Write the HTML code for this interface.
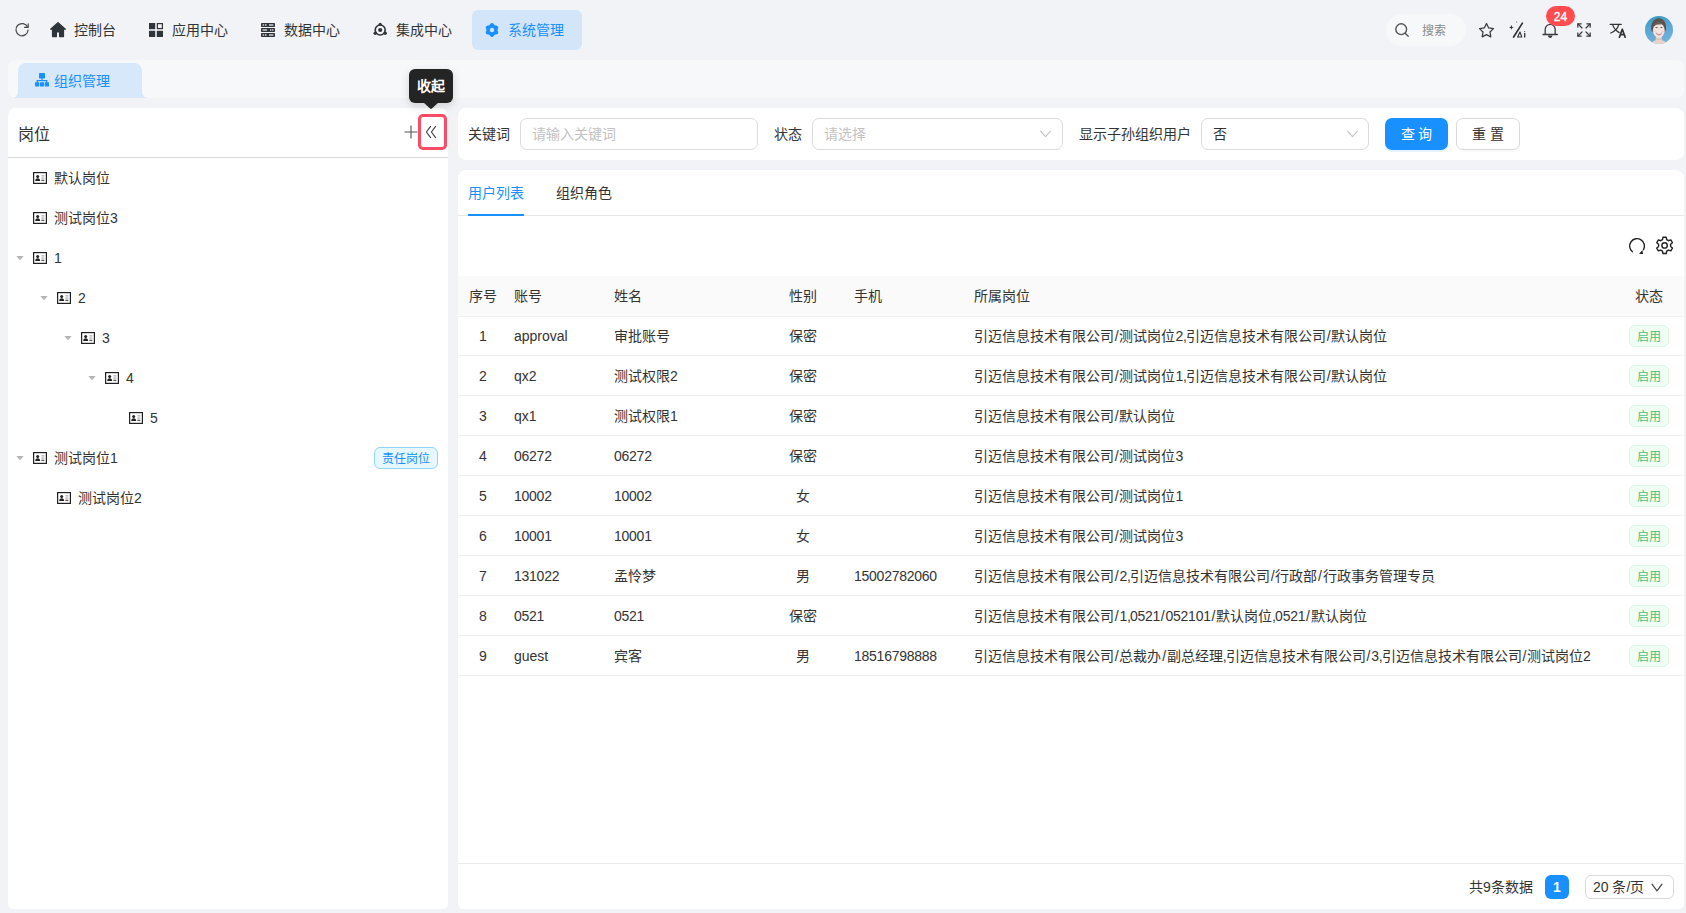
<!DOCTYPE html>
<html lang="zh-CN">
<head>
<meta charset="utf-8">
<title>组织管理</title>
<style>
*{box-sizing:border-box;margin:0;padding:0}
html,body{width:1686px;height:913px;overflow:hidden;font-family:"Liberation Sans",sans-serif}
body{background:#f2f3f7;font-family:"Liberation Sans",sans-serif;font-size:14px;color:#333;position:relative}
.abs{position:absolute}
svg{display:block}
/* top nav */
.nav-item{position:absolute;top:10px;height:40px;width:110px;border-radius:6px;line-height:40px;color:#333;font-size:14px;white-space:nowrap}
.nav-item svg{position:absolute;top:13px}
.nav-item span{position:absolute;left:36px;top:0}
.nav-item.active{background:#d3e5f8;color:#1890ff}
/* tab bar */
#tabbar{left:8px;top:60px;width:1676px;height:38px;background:#f7f8fa;border-radius:8px}
#tab{left:18px;top:63px;width:124px;height:35px;background:#d6e8fa;border-radius:8px 8px 0 0;color:#1890ff;font-size:14px;line-height:36px}
#tab span{position:absolute;left:36px;top:0;white-space:nowrap}
.flare{position:absolute;bottom:0;width:6px;height:6px;background:#d6e8fa;overflow:hidden}
.flare i{position:absolute;width:12px;height:12px;border-radius:50%;background:#f7f8fa;bottom:0}
/* panels */
.panel{position:absolute;background:#fff;border-radius:8px}
.lbl{position:absolute;white-space:nowrap;font-size:14px;color:#333;line-height:20px}
.inp{position:absolute;top:118px;height:32px;border:1px solid #dbdbdb;border-radius:7px;background:#fff;font-size:14px;line-height:30px;padding-left:11px;color:#c2c2c2;white-space:nowrap}
.inp svg{position:absolute;top:9px}
.btn{position:absolute;top:118px;height:32px;border-radius:7px;font-size:14px;line-height:30px;text-align:center;white-space:nowrap}
/* tree */
.tr{position:absolute;height:40px;line-height:40px;font-size:14px;color:#333;white-space:nowrap}
.caret{position:absolute;width:7.4px;height:4.3px;background:#b5b5b5;clip-path:polygon(0 0,100% 0,50% 100%);margin:1px 0 0 .3px}
/* table */
.th,.td{position:absolute;white-space:nowrap;font-size:14px;line-height:20px;color:#333}
.row-line{position:absolute;left:458px;width:1226px;height:1px;background:#f0f0f0}
.tag{position:absolute;left:1629px;width:40px;height:22px;border:1px solid #dcf6e4;background:#f0fdf4;border-radius:6px;color:#4cc375;font-size:12px;line-height:22px;text-align:center}
i{font-style:normal}
.sl{padding:0 .75px}
.cm{margin-right:-.9px}
.dg{letter-spacing:-.25px}
</style>
</head>
<body>
<!-- TOPNAV -->
<!-- refresh -->
<svg class="abs" style="left:14px;top:22px" width="16" height="16" viewBox="0 0 16 16" fill="none" stroke="#484848" stroke-width="1.2" stroke-linecap="round" stroke-linejoin="round"><path d="M13.6 5.2A6.1 6.1 0 1 0 14.1 8"/><path d="M14.2 1.8v3.6h-3.6" /></svg>
<div class="nav-item" style="left:38px;width:96px">
  <svg style="left:11px;top:11px" width="18" height="17" viewBox="0 0 18 17"><path fill="#30353b" stroke="#30353b" stroke-width="1.2" stroke-linejoin="round" d="M9 1.600 1.600 8.200h1.900v7.400h3.900v-4.600h3.200v4.600h3.900V8.200h1.900z"/></svg>
  <span>控制台</span>
</div>
<div class="nav-item" style="left:136px">
  <svg style="left:13px" width="14" height="14" viewBox="0 0 14 14"><rect x="0" y="0" width="6.200" height="6.200" fill="#30353b"/><rect x="0" y="7.800" width="6.200" height="6.200" fill="#30353b"/><rect x="7.800" y="7.800" width="6.200" height="6.200" fill="#30353b"/><rect x="8.400" y="0.600" width="5" height="5" fill="none" stroke="#30353b" stroke-width="1.200"/></svg>
  <span>应用中心</span>
</div>
<div class="nav-item" style="left:248px">
  <svg style="left:13px" width="14" height="14" viewBox="0 0 14 14"><g fill="#30353b"><rect x="0" y="0" width="14" height="4" rx="0.8"/><rect x="0" y="5" width="14" height="4" rx="0.8"/><rect x="0" y="10" width="14" height="4" rx="0.8"/></g><g fill="#f2f3f7"><rect x="1.6" y="1.4" width="1.6" height="1.2"/><rect x="4" y="1.4" width="1.6" height="1.2"/><rect x="8" y="1.4" width="4.4" height="1.2"/><rect x="1.6" y="6.4" width="4.4" height="1.2"/><rect x="9" y="6.4" width="1.4" height="1.2"/><rect x="11" y="6.4" width="1.4" height="1.2"/><rect x="1.6" y="11.4" width="1.6" height="1.2"/><rect x="4" y="11.4" width="1.6" height="1.2"/><rect x="8" y="11.4" width="4.4" height="1.2"/></g></svg>
  <span>数据中心</span>
</div>
<div class="nav-item" style="left:360px">
  <svg style="left:13px;top:12px" width="15" height="15" viewBox="0 0 15 15"><circle cx="7.2" cy="8" r="5" fill="none" stroke="#30353b" stroke-width="1.6"/><circle cx="7.2" cy="8" r="2.1" fill="#30353b"/><circle cx="7.2" cy="2.3" r="1.6" fill="#30353b"/><circle cx="2.2" cy="11.3" r="1.7" fill="#30353b"/><circle cx="12.2" cy="11.3" r="1.7" fill="#30353b"/></svg>
  <span>集成中心</span>
</div>
<div class="nav-item active" style="left:472px">
  <svg style="left:13px" width="14" height="14" viewBox="0 0 14 14"><path fill="#1890ff" d="M12.55 7.00 L12.59 7.37 L12.71 7.75 L12.87 8.17 L13.04 8.62 L13.17 9.10 L13.23 9.58 L13.19 10.05 L13.02 10.47 L12.73 10.83 L12.35 11.11 L11.90 11.30 L11.42 11.42 L10.94 11.50 L10.50 11.57 L10.11 11.66 L9.78 11.81 L9.48 12.03 L9.20 12.32 L8.92 12.66 L8.62 13.04 L8.27 13.39 L7.88 13.69 L7.45 13.88 L7.00 13.95 L6.55 13.88 L6.12 13.69 L5.73 13.39 L5.38 13.04 L5.08 12.66 L4.80 12.32 L4.52 12.03 L4.23 11.81 L3.89 11.66 L3.50 11.57 L3.06 11.50 L2.58 11.42 L2.10 11.30 L1.65 11.11 L1.27 10.83 L0.98 10.47 L0.81 10.05 L0.77 9.58 L0.83 9.10 L0.96 8.62 L1.13 8.17 L1.29 7.75 L1.41 7.37 L1.45 7.00 L1.41 6.63 L1.29 6.25 L1.13 5.83 L0.96 5.38 L0.83 4.90 L0.77 4.42 L0.81 3.95 L0.98 3.53 L1.27 3.17 L1.65 2.89 L2.10 2.70 L2.58 2.58 L3.06 2.50 L3.50 2.43 L3.89 2.34 L4.22 2.19 L4.52 1.97 L4.80 1.68 L5.08 1.34 L5.38 0.96 L5.73 0.61 L6.12 0.31 L6.55 0.12 L7.00 0.05 L7.45 0.12 L7.88 0.31 L8.27 0.61 L8.62 0.96 L8.92 1.34 L9.20 1.68 L9.48 1.97 L9.78 2.19 L10.11 2.34 L10.50 2.43 L10.94 2.50 L11.42 2.58 L11.90 2.70 L12.35 2.89 L12.73 3.17 L13.02 3.52 L13.19 3.95 L13.23 4.42 L13.17 4.90 L13.04 5.38 L12.87 5.83 L12.71 6.25 L12.59 6.63z"/><circle cx="7" cy="7" r="2.2" fill="#d3e5f8"/></svg>
  <span>系统管理</span>
</div>
<!-- right side -->
<div class="abs" style="left:1386px;top:14px;width:80px;height:32px;border-radius:16px;background:#f7f8fa"></div>
<svg class="abs" style="left:1394px;top:22px" width="16" height="16" viewBox="0 0 16 16" fill="none" stroke="#555" stroke-width="1.4" stroke-linecap="round"><circle cx="7.2" cy="7.2" r="5.4"/><path d="M11.2 11.2l3 3"/></svg>
<div class="abs" style="left:1422px;top:23px;font-size:12px;line-height:16px;color:#8a8a8a;white-space:nowrap">搜索</div>
<!-- star -->
<svg class="abs" style="left:1477.500px;top:21.500px" width="17" height="17" viewBox="0 0 18 18" fill="none" stroke="#3a3a3a" stroke-width="1.350" stroke-linejoin="round"><path d="M9 1.600l2.300 4.700 5.100 0.700-3.700 3.600 0.900 5.100L9 13.300l-4.600 2.400 0.900-5.100L1.600 7l5.100-0.700z"/></svg>
<!-- ai -->
<svg class="abs" style="left:1508px;top:20px" width="20" height="20" viewBox="0 0 20 20" fill="none" stroke="#333" stroke-width="1.700" stroke-linecap="round"><path d="M14.400 3.100L5.600 17"/><path d="M9.600 17l2.400-5 1.800 5z" stroke-width="1.100" stroke-linejoin="round"/><path d="M16.700 13.400v3.600" stroke-width="1.300"/><circle cx="16.700" cy="11.500" r="0.600" fill="#333" stroke="none"/><path d="M3.400 5l0.700 1.700 1.700 0.700-1.700 0.700-0.700 1.700-0.700-1.700L1 7.400l1.700-0.700z" fill="#333" stroke="none"/><circle cx="8.700" cy="1.900" r="0.500" fill="#333" stroke="none"/></svg>
<!-- bell -->
<svg class="abs" style="left:1541px;top:21px" width="18" height="18" viewBox="0 0 18 18" fill="none" stroke="#3a3a3a" stroke-width="1.300" stroke-linecap="round" stroke-linejoin="round"><path d="M4.200 13.200V8.400a5 5 0 0 1 10 0v4.800"/><path d="M2 13.500h14.400"/><path d="M6.900 14.600a2.300 2.300 0 0 0 4.600 0z" fill="#3a3a3a" stroke="none"/></svg>
<div class="abs" style="left:1546px;top:6px;width:29px;height:20px;border-radius:10px;background:#ff4d4f;color:#fff;font-size:12px;-webkit-text-stroke:0.350px #fff;line-height:22px;text-align:center">24</div>
<!-- fullscreen -->
<svg class="abs" style="left:1577px;top:23px" width="14" height="14" viewBox="0 0 14 14" fill="none" stroke="#3a3a3a" stroke-width="1.200" stroke-linecap="round" stroke-linejoin="round"><path d="M0.800 4.200V0.800h3.400M9.800 0.800h3.400v3.400M13.200 9.800v3.400H9.800M4.200 13.200H0.800V9.800"/><path d="M1 1l4 4M13 1l-4 4M13 13l-4-4M1 13l4-4"/></svg>
<!-- translate -->
<svg class="abs" style="left:1609px;top:21px" width="18" height="18" viewBox="0 0 18 18" fill="none" stroke="#333" stroke-width="1.250" stroke-linecap="round" stroke-linejoin="round"><path d="M1.200 3.400h11"/><path d="M3.600 3.600c1 3.200 3.200 6 6.600 8"/><path d="M9.800 3.600c-1 3.600-3.800 6.800-8 8.400"/><path d="M10.400 16.200l2.900-8 2.900 8M11.400 13.600h3.800" stroke-width="1.700"/></svg>
<!-- avatar -->
<svg class="abs" style="left:1645px;top:16px" width="28" height="28" viewBox="0 0 28 28"><defs><clipPath id="av"><circle cx="14" cy="14" r="14"/></clipPath><linearGradient id="avbg" x1="0" y1="0" x2="0.3" y2="1"><stop offset="0" stop-color="#2f97bf"/><stop offset="0.5" stop-color="#5aa7d3"/><stop offset="1" stop-color="#70b0dc"/></linearGradient><filter id="avbl" x="-10%" y="-10%" width="120%" height="120%"><feGaussianBlur stdDeviation="0.45"/></filter></defs><g clip-path="url(#av)"><rect width="28" height="28" fill="url(#avbg)"/><g filter="url(#avbl)"><path d="M6.2 13.200c-0.600-5.400 2.400-11 7.600-11s8 5.200 7.200 10.800c-0.200 1.400-0.600 2.200-1 2.600l-13 0c-0.400-0.600-0.700-1.400-0.800-2.400z" fill="#5b524d"/><path d="M6.500 28c0.400-2.200 2-3.200 4.200-3.700l0.200-4h5.800l0.200 4c2.400 0.500 4.400 1.500 5.200 3.700z" fill="#ead3c8"/><ellipse cx="13.800" cy="14.200" rx="5.900" ry="7.400" fill="#f4e4e0"/><path d="M8 11.600c0.400-3 2.600-5.400 5.800-5.400 3.200 0 5.400 2.200 5.800 5.400-0.800-1.400-1.800-2.600-2.600-3.400-1.200 0.200-2.400 0.200-3.800 0.200-2.200 0.200-4 1.400-5.200 3.200z" fill="#6a5f59"/><rect x="10.400" y="11.100" width="2.300" height="0.900" rx="0.400" fill="#6b5d58"/><rect x="15.300" y="11.100" width="2.300" height="0.900" rx="0.400" fill="#6b5d58"/><path d="M10.800 16.400c1.600 0.700 4.600 0.700 6.200 0-0.400 2.200-1.800 3-3.100 3s-2.700-0.800-3.100-3z" fill="#cf8f96"/><path d="M11.400 16.700c1.400 0.500 3.600 0.500 5 0-0.300 0.800-1.400 1.100-2.500 1.100s-2.200-0.300-2.500-1.100z" fill="#fbf3f0"/><ellipse cx="9.600" cy="15.400" rx="1.300" ry="1" fill="#f3c9c9" opacity="0.700"/><ellipse cx="18.200" cy="15.400" rx="1.300" ry="1" fill="#f3c9c9" opacity="0.700"/><path d="M10.900 21.800c1.800 1.200 4.200 1.200 5.800 0v1.400c-1.800 0.800-4 0.800-5.800 0z" fill="#d9b9aa" opacity="0.800"/></g></g></svg>
<!-- /TOPNAV -->
<!-- TABBAR -->
<div id="tabbar" class="abs"></div>
<div id="tab" class="abs">
  <div class="flare" style="left:-6px"><i style="right:0"></i></div>
  <div class="flare" style="right:-6px"><i style="left:0"></i></div>
  <svg class="abs" style="left:17px;top:10px" width="14" height="14" viewBox="0 0 14 14" fill="#1890ff"><rect x="4" y="0" width="6" height="5.4" rx="0.4"/><rect x="6.4" y="5" width="1.2" height="3"/><rect x="1.8" y="7" width="10.4" height="1.2"/><rect x="1.8" y="7" width="1.2" height="3"/><rect x="11" y="7" width="1.2" height="3"/><rect x="0" y="9.2" width="4.2" height="4.2" rx="0.4"/><rect x="4.9" y="9.2" width="4.2" height="4.2" rx="0.4"/><rect x="9.8" y="9.2" width="4.2" height="4.2" rx="0.4"/></svg>
  <span>组织管理</span>
</div>
<!-- /TABBAR -->
<!-- LEFT -->
<div class="panel" style="left:8px;top:108px;width:440px;height:800.600px;border-radius:8px 8px 5px 5px"></div>
<div class="abs" style="left:18px;top:124px;font-size:16px;line-height:22px;color:#333;white-space:nowrap">岗位</div>
<div class="abs" style="left:8px;top:157px;width:440px;height:1px;background:#d9d9d9"></div>
<svg class="abs" style="left:404px;top:125px" width="14" height="14" viewBox="0 0 14 14" stroke="#555" stroke-width="1.1" fill="none"><path d="M7 0.5v13M0.5 7h13"/></svg>
<svg class="abs" style="left:424px;top:125px" width="14" height="14" viewBox="0 0 14 14" stroke="#444" stroke-width="1.2" fill="none" stroke-linecap="round" stroke-linejoin="round"><path d="M6.6 1.4 2.4 7l4.2 5.6M11.6 1.4 7.4 7l4.2 5.6"/></svg>
<div class="abs" style="left:417.5px;top:113.5px;width:29.7px;height:36.7px;border:3px solid #fb4c63;border-radius:5px"></div>
<svg class="abs" style="left:33px;top:172px" width="14" height="12" viewBox="0 0 14 12"><rect x="0.6" y="0.6" width="12.8" height="10.8" fill="none" stroke="#222" stroke-width="1.2"/><circle cx="4.7" cy="4.4" r="1.5" fill="#222"/><path d="M2.2 9c0-1.8 1-2.7 2.5-2.7S7.2 7.200 7.200 9z" fill="#222"/><rect x="8.4" y="3.400" width="3" height="1" fill="#999"/><rect x="8.4" y="5.6" width="3" height="1" fill="#999"/><rect x="8.4" y="7.800" width="3" height="1" fill="#333"/></svg>
<div class="tr" style="left:54px;top:158px">默认岗位</div>
<svg class="abs" style="left:33px;top:212px" width="14" height="12" viewBox="0 0 14 12"><rect x="0.6" y="0.6" width="12.8" height="10.8" fill="none" stroke="#222" stroke-width="1.2"/><circle cx="4.7" cy="4.4" r="1.5" fill="#222"/><path d="M2.2 9c0-1.8 1-2.7 2.5-2.7S7.2 7.200 7.200 9z" fill="#222"/><rect x="8.4" y="3.400" width="3" height="1" fill="#999"/><rect x="8.4" y="5.6" width="3" height="1" fill="#999"/><rect x="8.4" y="7.800" width="3" height="1" fill="#333"/></svg>
<div class="tr" style="left:54px;top:198px">测试岗位3</div>
<div class="caret" style="left:16px;top:255px"></div>
<svg class="abs" style="left:33px;top:252px" width="14" height="12" viewBox="0 0 14 12"><rect x="0.6" y="0.6" width="12.8" height="10.8" fill="none" stroke="#222" stroke-width="1.2"/><circle cx="4.7" cy="4.4" r="1.5" fill="#222"/><path d="M2.2 9c0-1.8 1-2.7 2.5-2.7S7.2 7.200 7.200 9z" fill="#222"/><rect x="8.4" y="3.400" width="3" height="1" fill="#999"/><rect x="8.4" y="5.6" width="3" height="1" fill="#999"/><rect x="8.4" y="7.800" width="3" height="1" fill="#333"/></svg>
<div class="tr" style="left:54px;top:238px">1</div>
<div class="caret" style="left:40px;top:295px"></div>
<svg class="abs" style="left:57px;top:292px" width="14" height="12" viewBox="0 0 14 12"><rect x="0.6" y="0.6" width="12.8" height="10.8" fill="none" stroke="#222" stroke-width="1.2"/><circle cx="4.7" cy="4.4" r="1.5" fill="#222"/><path d="M2.2 9c0-1.8 1-2.7 2.5-2.7S7.2 7.200 7.200 9z" fill="#222"/><rect x="8.4" y="3.400" width="3" height="1" fill="#999"/><rect x="8.4" y="5.6" width="3" height="1" fill="#999"/><rect x="8.4" y="7.800" width="3" height="1" fill="#333"/></svg>
<div class="tr" style="left:78px;top:278px">2</div>
<div class="caret" style="left:64px;top:335px"></div>
<svg class="abs" style="left:81px;top:332px" width="14" height="12" viewBox="0 0 14 12"><rect x="0.6" y="0.6" width="12.8" height="10.8" fill="none" stroke="#222" stroke-width="1.2"/><circle cx="4.7" cy="4.4" r="1.5" fill="#222"/><path d="M2.2 9c0-1.8 1-2.7 2.5-2.7S7.2 7.200 7.200 9z" fill="#222"/><rect x="8.4" y="3.400" width="3" height="1" fill="#999"/><rect x="8.4" y="5.6" width="3" height="1" fill="#999"/><rect x="8.4" y="7.800" width="3" height="1" fill="#333"/></svg>
<div class="tr" style="left:102px;top:318px">3</div>
<div class="caret" style="left:88px;top:375px"></div>
<svg class="abs" style="left:105px;top:372px" width="14" height="12" viewBox="0 0 14 12"><rect x="0.6" y="0.6" width="12.8" height="10.8" fill="none" stroke="#222" stroke-width="1.2"/><circle cx="4.7" cy="4.4" r="1.5" fill="#222"/><path d="M2.2 9c0-1.8 1-2.7 2.5-2.7S7.2 7.200 7.200 9z" fill="#222"/><rect x="8.4" y="3.400" width="3" height="1" fill="#999"/><rect x="8.4" y="5.6" width="3" height="1" fill="#999"/><rect x="8.4" y="7.800" width="3" height="1" fill="#333"/></svg>
<div class="tr" style="left:126px;top:358px">4</div>
<svg class="abs" style="left:129px;top:412px" width="14" height="12" viewBox="0 0 14 12"><rect x="0.6" y="0.6" width="12.8" height="10.8" fill="none" stroke="#222" stroke-width="1.2"/><circle cx="4.7" cy="4.4" r="1.5" fill="#222"/><path d="M2.2 9c0-1.8 1-2.7 2.5-2.7S7.2 7.200 7.200 9z" fill="#222"/><rect x="8.4" y="3.400" width="3" height="1" fill="#999"/><rect x="8.4" y="5.6" width="3" height="1" fill="#999"/><rect x="8.4" y="7.800" width="3" height="1" fill="#333"/></svg>
<div class="tr" style="left:150px;top:398px">5</div>
<div class="caret" style="left:16px;top:455px"></div>
<svg class="abs" style="left:33px;top:452px" width="14" height="12" viewBox="0 0 14 12"><rect x="0.6" y="0.6" width="12.8" height="10.8" fill="none" stroke="#222" stroke-width="1.2"/><circle cx="4.7" cy="4.4" r="1.5" fill="#222"/><path d="M2.2 9c0-1.8 1-2.7 2.5-2.7S7.2 7.200 7.200 9z" fill="#222"/><rect x="8.4" y="3.400" width="3" height="1" fill="#999"/><rect x="8.4" y="5.6" width="3" height="1" fill="#999"/><rect x="8.4" y="7.800" width="3" height="1" fill="#333"/></svg>
<div class="tr" style="left:54px;top:438px">测试岗位1</div>
<svg class="abs" style="left:57px;top:492px" width="14" height="12" viewBox="0 0 14 12"><rect x="0.6" y="0.6" width="12.8" height="10.8" fill="none" stroke="#222" stroke-width="1.2"/><circle cx="4.7" cy="4.4" r="1.5" fill="#222"/><path d="M2.2 9c0-1.8 1-2.7 2.5-2.7S7.2 7.200 7.200 9z" fill="#222"/><rect x="8.4" y="3.400" width="3" height="1" fill="#999"/><rect x="8.4" y="5.6" width="3" height="1" fill="#999"/><rect x="8.4" y="7.800" width="3" height="1" fill="#333"/></svg>
<div class="tr" style="left:78px;top:478px">测试岗位2</div>
<div class="abs" style="left:374px;top:447px;width:64px;height:22px;border:1px solid #91d5ff;background:#e6f7ff;border-radius:6px;color:#1890ff;font-size:12px;line-height:22px;text-align:center;white-space:nowrap">责任岗位</div>
<!-- /LEFT -->
<!-- FILTER -->
<div class="panel" style="left:458px;top:108px;width:1226px;height:52px"></div>
<div class="lbl" style="left:468px;top:124px">关键词</div>
<div class="inp" style="left:520px;width:238px">请输入关键词</div>
<div class="lbl" style="left:774px;top:124px">状态</div>
<div class="inp" style="left:812px;width:251px">请选择<svg style="left:226px" width="13" height="12" viewBox="0 0 13 12" fill="none" stroke="#c4c4c4" stroke-width="1.150" stroke-linecap="round" stroke-linejoin="round"><path d="M1.700 3.300 6.500 8.700 11.300 3.300"/></svg></div>
<div class="lbl" style="left:1079px;top:124px">显示子孙组织用户</div>
<div class="inp" style="left:1201px;width:168px;color:#333">否<svg style="left:144px" width="13" height="12" viewBox="0 0 13 12" fill="none" stroke="#c4c4c4" stroke-width="1.150" stroke-linecap="round" stroke-linejoin="round"><path d="M1.700 3.300 6.500 8.700 11.300 3.300"/></svg></div>
<div class="btn" style="left:1385px;width:63px;background:#1890ff;color:#fff;line-height:32px;box-shadow:0 2px 0 rgba(24,144,255,0.12)">查 询</div>
<div class="btn" style="left:1456px;width:64px;background:#fff;border:1px solid #d9d9d9;color:#333;box-shadow:0 2px 0 rgba(0,0,0,0.02)">重 置</div>
<!-- /FILTER -->
<!-- MAIN -->
<div class="panel" style="left:458px;top:170px;width:1226px;height:738.600px;border-radius:8px 8px 5px 5px"></div>
<div class="lbl" style="left:468px;top:183px;color:#1890ff">用户列表</div>
<div class="lbl" style="left:556px;top:183px">组织角色</div>
<div class="abs" style="left:458px;top:215px;width:1226px;height:1px;background:#e8e8e8"></div>
<div class="abs" style="left:468px;top:214px;width:56px;height:2px;background:#1890ff"></div>
<svg class="abs" style="left:1628px;top:237px" width="18" height="18" viewBox="0 0 18 18" fill="none" stroke="#222" stroke-width="1.4" stroke-linecap="round"><path d="M4.400 14.800A7.400 7.400 0 1 1 15.500 12.700"/><path d="M11 17h4l-0.600-3.900z" fill="#222" stroke="none"/></svg>
<svg class="abs" style="left:1655.100px;top:236.300px" width="19" height="19" viewBox="0 0 19 19" fill="none" stroke="#222" stroke-width="1.400" stroke-linejoin="round"><path d="M11.69 3.67L11.25 1.27L7.95 1.27L7.51 3.67L5.68 4.73L3.38 3.90L1.73 6.77L3.59 8.34L3.59 10.46L1.73 12.03L3.38 14.90L5.68 14.07L7.51 15.13L7.95 17.53L11.25 17.53L11.69 15.13L13.52 14.07L15.82 14.90L17.47 12.03L15.61 10.46L15.61 8.34L17.47 6.77L15.82 3.90L13.52 4.73z"/><circle cx="9.6" cy="9.4" r="2.700"/></svg>
<div class="abs" style="left:458px;top:276px;width:1226px;height:40px;background:#fafafa"></div>
<div class="th" style="left:469px;top:286px">序号</div>
<div class="th" style="left:514px;top:286px">账号</div>
<div class="th" style="left:614px;top:286px">姓名</div>
<div class="th" style="left:789px;top:286px">性别</div>
<div class="th" style="left:854px;top:286px">手机</div>
<div class="th" style="left:974px;top:286px">所属岗位</div>
<div class="th" style="left:1635px;top:286px">状态</div>
<div class="row-line" style="top:316px"></div>
<div class="td" style="left:458px;width:50px;text-align:center;top:326px">1</div>
<div class="td" style="left:514px;top:326px">approval</div>
<div class="td" style="left:614px;top:326px">审批账号</div>
<div class="td" style="left:773px;width:60px;text-align:center;top:326px">保密</div>
<div class="td" style="left:974px;top:326px">引迈信息技术有限公司<i class="sl">/</i>测试岗位<i class="dg">2</i><i class="cm">,</i>引迈信息技术有限公司<i class="sl">/</i>默认岗位</div>
<div class="tag" style="top:325px">启用</div>
<div class="row-line" style="top:355px"></div>
<div class="td" style="left:458px;width:50px;text-align:center;top:366px">2</div>
<div class="td" style="left:514px;top:366px">qx<i class="dg">2</i></div>
<div class="td" style="left:614px;top:366px">测试权限<i class="dg">2</i></div>
<div class="td" style="left:773px;width:60px;text-align:center;top:366px">保密</div>
<div class="td" style="left:974px;top:366px">引迈信息技术有限公司<i class="sl">/</i>测试岗位<i class="dg">1</i><i class="cm">,</i>引迈信息技术有限公司<i class="sl">/</i>默认岗位</div>
<div class="tag" style="top:365px">启用</div>
<div class="row-line" style="top:395px"></div>
<div class="td" style="left:458px;width:50px;text-align:center;top:406px">3</div>
<div class="td" style="left:514px;top:406px">qx<i class="dg">1</i></div>
<div class="td" style="left:614px;top:406px">测试权限<i class="dg">1</i></div>
<div class="td" style="left:773px;width:60px;text-align:center;top:406px">保密</div>
<div class="td" style="left:974px;top:406px">引迈信息技术有限公司<i class="sl">/</i>默认岗位</div>
<div class="tag" style="top:405px">启用</div>
<div class="row-line" style="top:435px"></div>
<div class="td" style="left:458px;width:50px;text-align:center;top:446px">4</div>
<div class="td" style="left:514px;top:446px"><i class="dg">06272</i></div>
<div class="td" style="left:614px;top:446px"><i class="dg">06272</i></div>
<div class="td" style="left:773px;width:60px;text-align:center;top:446px">保密</div>
<div class="td" style="left:974px;top:446px">引迈信息技术有限公司<i class="sl">/</i>测试岗位<i class="dg">3</i></div>
<div class="tag" style="top:445px">启用</div>
<div class="row-line" style="top:475px"></div>
<div class="td" style="left:458px;width:50px;text-align:center;top:486px">5</div>
<div class="td" style="left:514px;top:486px"><i class="dg">10002</i></div>
<div class="td" style="left:614px;top:486px"><i class="dg">10002</i></div>
<div class="td" style="left:773px;width:60px;text-align:center;top:486px">女</div>
<div class="td" style="left:974px;top:486px">引迈信息技术有限公司<i class="sl">/</i>测试岗位<i class="dg">1</i></div>
<div class="tag" style="top:485px">启用</div>
<div class="row-line" style="top:515px"></div>
<div class="td" style="left:458px;width:50px;text-align:center;top:526px">6</div>
<div class="td" style="left:514px;top:526px"><i class="dg">10001</i></div>
<div class="td" style="left:614px;top:526px"><i class="dg">10001</i></div>
<div class="td" style="left:773px;width:60px;text-align:center;top:526px">女</div>
<div class="td" style="left:974px;top:526px">引迈信息技术有限公司<i class="sl">/</i>测试岗位<i class="dg">3</i></div>
<div class="tag" style="top:525px">启用</div>
<div class="row-line" style="top:555px"></div>
<div class="td" style="left:458px;width:50px;text-align:center;top:566px">7</div>
<div class="td" style="left:514px;top:566px"><i class="dg">131022</i></div>
<div class="td" style="left:614px;top:566px">孟怜梦</div>
<div class="td" style="left:773px;width:60px;text-align:center;top:566px">男</div>
<div class="td" style="left:854px;top:566px"><i class="dg">15002782060</i></div>
<div class="td" style="left:974px;top:566px">引迈信息技术有限公司<i class="sl">/</i><i class="dg">2</i><i class="cm">,</i>引迈信息技术有限公司<i class="sl">/</i>行政部<i class="sl">/</i>行政事务管理专员</div>
<div class="tag" style="top:565px">启用</div>
<div class="row-line" style="top:595px"></div>
<div class="td" style="left:458px;width:50px;text-align:center;top:606px">8</div>
<div class="td" style="left:514px;top:606px"><i class="dg">0521</i></div>
<div class="td" style="left:614px;top:606px"><i class="dg">0521</i></div>
<div class="td" style="left:773px;width:60px;text-align:center;top:606px">保密</div>
<div class="td" style="left:974px;top:606px">引迈信息技术有限公司<i class="sl">/</i><i class="dg">1</i><i class="cm">,</i><i class="dg">0521</i><i class="sl">/</i><i class="dg">052101</i><i class="sl">/</i>默认岗位<i class="cm">,</i><i class="dg">0521</i><i class="sl">/</i>默认岗位</div>
<div class="tag" style="top:605px">启用</div>
<div class="row-line" style="top:635px"></div>
<div class="td" style="left:458px;width:50px;text-align:center;top:646px">9</div>
<div class="td" style="left:514px;top:646px">guest</div>
<div class="td" style="left:614px;top:646px">宾客</div>
<div class="td" style="left:773px;width:60px;text-align:center;top:646px">男</div>
<div class="td" style="left:854px;top:646px"><i class="dg">18516798888</i></div>
<div class="td" style="left:974px;top:646px">引迈信息技术有限公司<i class="sl">/</i>总裁办<i class="sl">/</i>副总经理<i class="cm">,</i>引迈信息技术有限公司<i class="sl">/</i><i class="dg">3</i><i class="cm">,</i>引迈信息技术有限公司<i class="sl">/</i>测试岗位<i class="dg">2</i></div>
<div class="tag" style="top:645px">启用</div>
<div class="row-line" style="top:675px"></div>
<div class="abs" style="left:458px;top:863px;width:1226px;height:1px;background:#ebebeb"></div>
<div class="lbl" style="left:1469px;top:877px">共9条数据</div>
<div class="abs" style="left:1545px;top:875px;width:24px;height:24px;border-radius:6px;background:#1890ff;color:#fff;font-weight:bold;font-size:14px;line-height:24px;text-align:center">1</div>
<div class="abs" style="left:1585px;top:875px;width:89px;height:24px;border:1px solid #d9d9d9;border-radius:6px;background:#fff;font-size:14px;line-height:22px;padding-left:7px;color:#333;white-space:nowrap">20 条/页<svg class="abs" style="left:65px;top:6px" width="12" height="11" viewBox="0 0 12 11" fill="none" stroke="#444" stroke-width="1.2" stroke-linecap="round" stroke-linejoin="round"><path d="M1 2.200 6 8.800 11 2.200"/></svg></div>
<!-- /MAIN -->
<!-- TOOLTIP -->
<div class="abs" style="left:409px;top:69px;width:44px;height:34px;border-radius:6px;background:#242424;color:#fff;font-size:14px;font-weight:bold;line-height:34px;text-align:center;white-space:nowrap;box-shadow:0 3px 10px rgba(0,0,0,0.15)">收起</div>
<svg class="abs" style="left:423px;top:102px" width="16" height="7" viewBox="0 0 16 7"><path d="M0 0h16L9.2 6.200a1.800 1.800 0 0 1-2.400 0z" fill="#242424"/></svg>
<!-- /TOOLTIP -->
</body>
</html>
